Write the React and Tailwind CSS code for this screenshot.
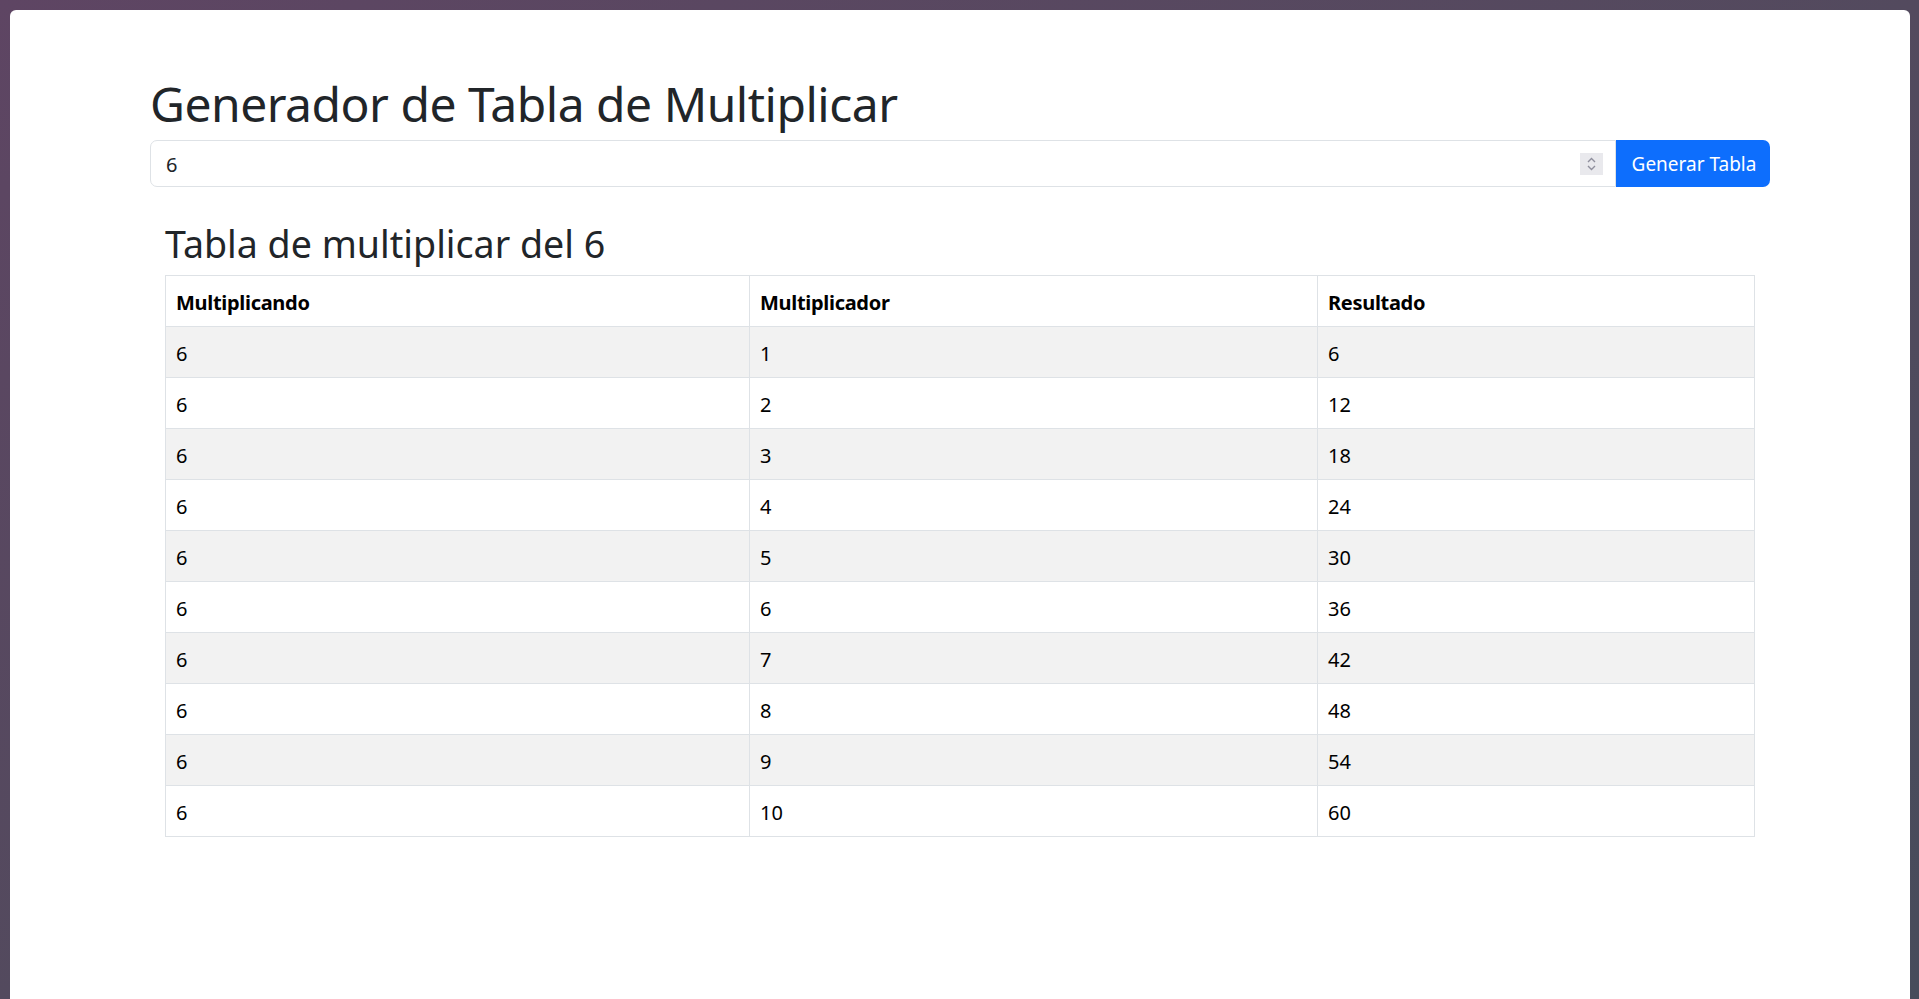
import React from "react";

const rows = [1, 2, 3, 4, 5, 6, 7, 8, 9, 10];

export default function App() {
  const font = { fontFamily: '"Noto Sans", "Open Sans", sans-serif' };
  return (
    <div
      className="h-[999px] overflow-hidden bg-gradient-to-br from-[#5e4563] via-[#534a5e] to-[#474c5b] pt-[10px] pl-[10px] pr-[9px]"
      style={font}
    >
      <div className="h-[989px] rounded-t-[6px] bg-white pt-[64px]">
        <div className="mx-auto w-[1620px]">
          <h1 className="text-[48px] leading-[60px] tracking-[-0.5px] font-normal text-[#212529]">
            Generador de Tabla de Multiplicar
          </h1>
          <div className="mt-[6px] flex h-[47px]">
            <div className="flex flex-1 items-center rounded-l-[7px] border border-[#dee2e6] pl-[15px] pr-[12px]">
              <span className="flex-1 pt-[2px] text-[20px] text-[#212529]">6</span>
              <div className="flex h-[22px] w-[23px] flex-col items-center justify-center bg-[#e9e9ed]">
                <svg width="11" height="16" viewBox="0 0 11 16" fill="none" stroke="#8f8f9d" strokeWidth="1.4">
                  <path d="M2 6 L5.5 2.5 L9 6" />
                  <path d="M2 10 L5.5 13.5 L9 10" />
                </svg>
              </div>
            </div>
            <button className="w-[154px] rounded-r-[7px] bg-[#0d6efd] pt-[2px] pl-[2px] text-[19px] text-white">
              Generar Tabla
            </button>
          </div>
          <div className="px-[15px] pt-[35px]">
            <h2 className="mb-[9px] text-[37.6px] leading-[44px] font-normal text-[#212529]">
              Tabla de multiplicar del 6
            </h2>
            <table className="w-full border-collapse border border-[#dee2e6] text-[20px] text-black">
              <thead>
                <tr className="h-[51px]">
                  <th className="w-[584px] border border-[#dee2e6] px-[10px] pt-[3px] text-left font-bold tracking-[-0.3px]">Multiplicando</th>
                  <th className="w-[568px] border border-[#dee2e6] px-[10px] pt-[3px] text-left font-bold tracking-[-0.3px]">Multiplicador</th>
                  <th className="border border-[#dee2e6] px-[10px] pt-[3px] text-left font-bold tracking-[-0.3px]">Resultado</th>
                </tr>
              </thead>
              <tbody>
                {rows.map((n) => (
                  <tr key={n} className={n % 2 === 1 ? "h-[51px] bg-[#f2f2f2]" : "h-[51px] bg-white"}>
                    <td className="border border-[#dee2e6] px-[10px] pt-[3px]">6</td>
                    <td className="border border-[#dee2e6] px-[10px] pt-[3px]">{n}</td>
                    <td className="border border-[#dee2e6] px-[10px] pt-[3px]">{6 * n}</td>
                  </tr>
                ))}
              </tbody>
            </table>
          </div>
        </div>
      </div>
    </div>
  );
}
